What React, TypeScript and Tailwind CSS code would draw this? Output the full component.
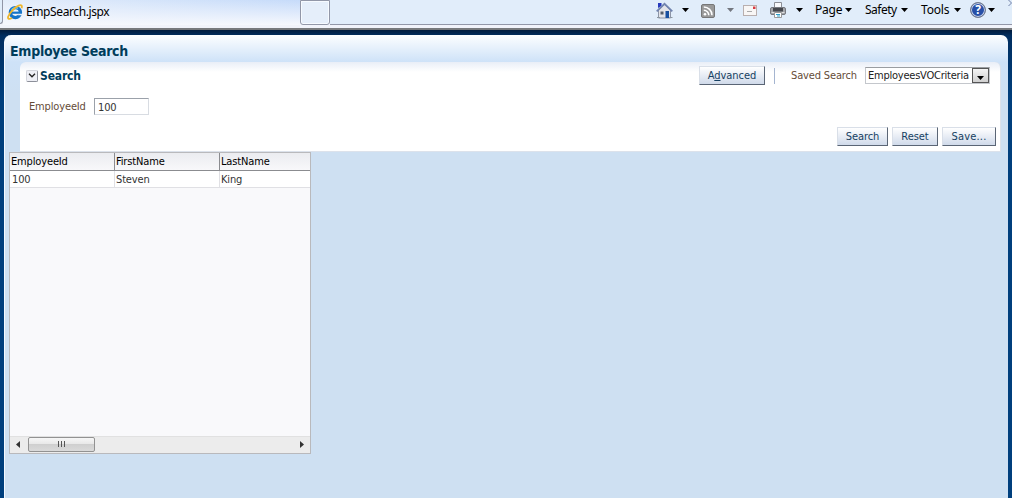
import React from "react"
import clsx from "clsx"

const columns = ["EmployeeId", "FirstName", "LastName"]
const employees = [["100", "Steven", "King"]]
const cellWidths = ["w-[105px]", "w-[105px]", "w-[90px]"]

function Caret({ className }: { className?: string }) {
  return (
    <svg viewBox="0 0 7 4" className={clsx("w-[7px] h-[4px] shrink-0", className)} fill="currentColor">
      <path d="M0 0h7L3.5 4z" />
    </svg>
  )
}

function BrowserIcon() {
  return (
    <svg viewBox="0 0 16 16" className="w-4 h-4 shrink-0">
      <circle cx="8.4" cy="8.6" r="5" fill="none" stroke="#1674c8" strokeWidth="3.4" />
      <path d="M4.5 6.5A4.5 4.5 0 0 1 11 4.4" fill="none" stroke="#63c3f3" strokeWidth="1.6" />
      <path d="M4 8.7h11" stroke="#1674c8" strokeWidth="2.2" />
      <path d="M11.3 9.8h4.2v1.5h-4.6z" fill="#e4effc" />
      <path
        d="M14.6 4.2C15.4 1.6 14.4.4 11.6 1.6 7.7 3.2 2.5 8.9 1.2 12.5.4 15 2.2 15.6 5 14"
        fill="none"
        stroke="#efb72d"
        strokeWidth="1.8"
      />
    </svg>
  )
}

function HomeIcon() {
  return (
    <svg viewBox="0 0 17 17" className="w-[17px] h-[17px] shrink-0">
      <path d="M2.5 8v8h12V8L8.5 2.5z" fill="#e3e4e9" stroke="#8d95a7" />
      <path d="M2 1h3.5v3L2 6z" fill="#2639bd" />
      <path d="M.7 9.3L8.5 1.8l7.8 7.5" fill="none" stroke="#7184af" strokeWidth="1.8" />
      <path d="M4.5 9.5h3v3h-3z" fill="#555e6b" />
      <path d="M9.5 9h3.5v7H9.5z" fill="#174f9f" />
      <path d="M1 15.5h3M13.5 15.5h3" stroke="#8c97a0" />
    </svg>
  )
}

function FeedIcon() {
  return (
    <svg viewBox="0 0 14 14" className="w-[14px] h-[14px] shrink-0">
      <rect x=".5" y=".5" width="13" height="13" rx="1.5" fill="#999" stroke="#777" />
      <circle cx="4" cy="10.2" r="1.3" fill="#fff" />
      <path d="M2.8 6.2a5 5 0 0 1 5 5M2.8 3a8.2 8.2 0 0 1 8.2 8.2" fill="none" stroke="#fff" strokeWidth="1.5" />
    </svg>
  )
}

function MailIcon() {
  return (
    <svg viewBox="0 0 14 11" className="w-[14px] h-[11px] shrink-0">
      <rect x=".5" y=".5" width="13" height="10" fill="#f8f6f5" stroke="#b9afae" />
      <path d="M10 1.5h2.5V4H10z" fill="#d83b43" />
      <path d="M4 6.5h5" stroke="#aaa" />
    </svg>
  )
}

function PrinterIcon() {
  return (
    <svg viewBox="0 0 16 16" className="w-4 h-4 shrink-0">
      <path d="M4.5 6V.5h7V6" fill="#f9fafc" stroke="#8b8e96" />
      <rect x=".5" y="5.5" width="15" height="7" rx="1.5" fill="#a3a5aa" stroke="#777a80" />
      <path d="M3 6h10v3.5H3z" fill="#45484e" />
      <path d="M1.5 10.5h13" stroke="#ddd" />
      <path d="M4.5 10.5h7v5h-7z" fill="#fff" stroke="#999" />
      <path d="M6 12.5h4M7 14h3" stroke="#2c9dc7" />
    </svg>
  )
}

function HelpIcon() {
  return (
    <span className="w-4 h-4 shrink-0 rounded-full border border-[#777d8c] bg-[#274fa7] ring-1 ring-inset ring-[#c9d3e8] text-white text-[12px] leading-[14px] font-bold text-center">
      ?
    </span>
  )
}

function BrowserBar() {
  return (
    <header className="h-[30px] bg-[#f1f3fa] border-b-2 border-[#77797c] [font-family:'Noto_Sans',sans-serif] text-[12px] tracking-[-0.2px] text-black">
      <div className="flex h-[25px]">
        <div className="w-[3px] h-[24px] rounded-br-[3px] border-r border-b border-[#9196a6] bg-[#e1edfa]" />
        <div className="flex w-[297px] pl-1 pt-1 bg-[linear-gradient(to_bottom,transparent,#f6f8fd),linear-gradient(to_right,#e3edfa,#c6dbfa)]">
          <div className="flex h-4 items-center">
            <BrowserIcon />
            <span className="ml-[3px] tracking-[-0.4px]">EmpSearch.jspx</span>
          </div>
        </div>
        <div className="w-[30px] rounded-b-[3px] border border-[#9297a8] bg-[#e5eefa] shadow-[inset_0_0_0_1px_#f6faff]" />
        <div className="flex flex-1 items-center border-b border-[#9297a8] bg-[#e1edfa] pl-[326px] pb-[4px] [&>*]:shrink-0">
          <HomeIcon />
          <Caret className="ml-[9px]" />
          <span className="ml-[12px] mt-[2px]">
            <FeedIcon />
          </span>
          <Caret className="ml-[12px] text-[#73777f]" />
          <span className="ml-[9px]">
            <MailIcon />
          </span>
          <span className="ml-[13px]">
            <PrinterIcon />
          </span>
          <Caret className="ml-[10px]" />
          <span className="ml-[12px] w-[27px]">Page</span>
          <Caret className="ml-[3px]" />
          <span className="ml-[13px] w-[33px] tracking-[-0.5px]">Safety</span>
          <Caret className="ml-[3px]" />
          <span className="ml-[13px] w-[30px]">Tools</span>
          <Caret className="ml-[3px] mr-[9px]" />
          <HelpIcon />
          <Caret className="ml-[2px]" />
          <svg viewBox="0 0 4 6" className="ml-[13px] -mt-[14px] w-[4px] h-[6px]" fill="none" stroke="#7180a8">
            <path d="M.5 0l3 3-3 3" />
          </svg>
        </div>
      </div>
    </header>
  )
}

interface ActionButtonProps {
  className?: string
  children: React.ReactNode
}

function ActionButton({ className, children }: ActionButtonProps) {
  return (
    <button
      className={clsx(
        "h-[19px] shrink-0 border border-t-[#d9dfe8] border-l-[#d9dfe8] border-r-[#5a6575] border-b-[#5a6575] bg-gradient-to-b from-white to-[#d0daea] tracking-[-0.05px] leading-[16px] text-[#163f62] whitespace-nowrap",
        className
      )}
    >
      {children}
    </button>
  )
}

function SearchPanel() {
  return (
    <section className="ml-[15px] mr-[7px] h-[90px] rounded-t-[6px] border-r border-b border-[#dce2eb] bg-[linear-gradient(#e9eef7,white_10px)]">
      <div className="flex h-[27px] items-center pl-[6px] pr-[10px]">
        <button className="flex w-[12px] h-[12px] items-center justify-center rounded-[2px] border border-[#d3d5dc] border-r-[#8c8f99] border-b-[#8c8f99] bg-[#eeeff5]">
          <svg viewBox="0 0 8 5" className="w-[8px] h-[5px]" fill="none" stroke="#222">
            <path d="M1 .8l3 3 3-3" strokeWidth="1.3" />
          </svg>
        </button>
        <h2 className="ml-[2px] text-[12px] font-bold tracking-[-0.15px] text-[#003d5b]">Search</h2>
        <ActionButton className="ml-auto w-[66px]">
          A<u>d</u>vanced
        </ActionButton>
        <div className="ml-[9px] w-px h-4 bg-[#a5b5d0]" />
        <span className="ml-[16px] w-[74px] pt-[2px] text-[#654c38]">Saved Search</span>
        <div className="flex w-[125px] h-[17px] border border-[#c4c7cc] border-t-[#9a9da1] bg-white">
          <span className="w-[106px] pl-[2px] leading-[16px] tracking-[-0.23px] text-[#222]">EmployeesVOCriteria</span>
          <span className="flex w-[17px] h-[15px] items-end justify-center border border-[#555] bg-gradient-to-b from-[#f4f4f4] to-[#d0d0d0] pb-[2px]">
            <Caret className="text-black" />
          </span>
        </div>
      </div>
      <div className="mt-[9px] flex h-[17px] items-center pl-[9px]">
        <label className="w-[65px] pt-[2px] text-[#654c38]">EmployeeId</label>
        <input
          defaultValue="100"
          className="w-[55px] h-[17px] border border-[#d8dce2] border-t-[#9ba1aa] border-l-[#9ba1aa] bg-white pl-[3px] pt-px tracking-[-0.15px] text-[#333]"
        />
      </div>
      <div className="mt-[12px] flex justify-end gap-[4px] pr-[4px]">
        <ActionButton className="w-[51px]">Search</ActionButton>
        <ActionButton className="w-[46px]">Reset</ActionButton>
        <ActionButton className="w-[54px] tracking-[0.2px]">Save...</ActionButton>
      </div>
    </section>
  )
}

function EmployeeTable() {
  return (
    <section className="ml-[4px] flex w-[302px] h-[302px] flex-col border border-[#b9b9bc] bg-[#f9f9fb]">
      <div className="flex h-[18px] shrink-0 border-b border-[#8b8c90] bg-gradient-to-b from-[#ebecf0] to-[#f8f8fa] text-black">
        {columns.map((column, i) => (
          <div
            key={column}
            className={clsx("pl-px leading-[18px]", cellWidths[i], i < 2 && "border-r border-[#8b8c90]")}
          >
            {column}
          </div>
        ))}
      </div>
      {employees.map((row) => (
        <div key={row[0]} className="flex h-[17px] shrink-0 border-b border-[#e0e0e4] bg-white text-[#333]">
          {row.map((cell, i) => (
            <div
              key={i}
              className={clsx("leading-[17px]", cellWidths[i], i === 0 ? "pl-[2px]" : "pl-px", i < 2 && "border-r border-[#e0e0e4]")}
            >
              {cell}
            </div>
          ))}
        </div>
      ))}
      {/* Horizontal scrollbar */}
      <div className="mt-auto flex h-[17px] shrink-0 items-center border-t border-[#e1e1e1] bg-[#ececec] pb-[2px]">
        <svg viewBox="0 0 4 7" className="ml-[6px] w-[4px] h-[7px]" fill="#333">
          <path d="M4 0v7L0 3.5z" />
        </svg>
        <div className="ml-[8px] flex w-[67px] h-[15px] items-center justify-center gap-[2px] rounded-[2px] border border-[#929292] bg-[linear-gradient(#f7f7f7_0%,#e8e8e8_45%,#cfcfcf_50%,#dadada_100%)]">
          <i className="w-px h-[6px] bg-[#555]" />
          <i className="w-px h-[6px] bg-[#555]" />
          <i className="w-px h-[6px] bg-[#555]" />
        </div>
        <svg viewBox="0 0 4 7" className="ml-auto mr-[6px] w-[4px] h-[7px]" fill="#333">
          <path d="M0 0v7l4-3.5z" />
        </svg>
      </div>
    </section>
  )
}

export default function App() {
  return (
    <div className="flex h-[498px] w-[1012px] flex-col overflow-hidden bg-[#003b78] [font-family:'DejaVu_Sans_Condensed','DejaVu_Sans',sans-serif] text-[11px] tracking-[-0.15px]">
      <BrowserBar />
      <div className="flex-1 bg-[linear-gradient(#001b3c,#002e60_6px,#003f7d_70px)] px-[4px] pt-[5px]">
        <main className="h-[463px] rounded-t-[7px] border-l border-[#f4f9ff] bg-[linear-gradient(#fcfeff,#cee2f8_27px,#cee0f2_60px)]">
          <div className="h-[27px] pl-[5px]">
            <h1 className="text-[14px] leading-[32px] font-bold tracking-[-0.28px] text-[#003d5b]">Employee Search</h1>
          </div>
          <SearchPanel />
          <EmployeeTable />
        </main>
      </div>
    </div>
  )
}
